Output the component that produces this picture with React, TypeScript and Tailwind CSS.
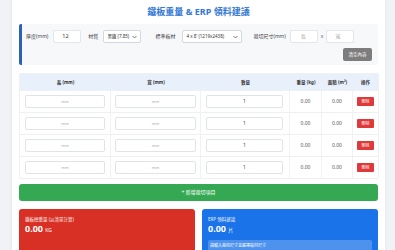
const font = { fontFamily: '"Noto Sans", "Noto Sans CJK TC", sans-serif' };

const rows = [0, 1, 2, 3];

function Chevron() {
  return (
    <svg width="5" height="4" viewBox="0 0 10 6" className="ml-auto">
      <path d="M1 1l4 4 4-4" fill="none" stroke="#555" strokeWidth="1.6" />
    </svg>
  );
}

export default function App() {
  return (
    <div className="min-h-[250px] w-[395px] overflow-hidden bg-[#f0f2f5]" style={font}>
      <div className="ml-3 mr-[10px] min-h-[250px] bg-white px-[7px] shadow-[0_0_4px_rgba(0,0,0,0.06)]">
        <h1 className="pt-[4px] pb-[5px] text-center text-[9px] leading-[15px] font-bold text-[#3479d4]">
          鐵板重量 &amp; ERP 領料建議
        </h1>

        <div className="rounded-[2px] border-l-[3px] border-[#2a62b8] bg-[#f6f8fa] pt-[6px] pr-[6px] pb-[4px] pl-[4px]">
          <div className="flex items-center text-[5px] text-[#444]">
            <span>厚度(mm)</span>
            <div className="ml-[5px] flex h-[13px] w-[28px] items-center rounded-[2px] border border-[#e3e6ea] bg-white pl-[8px] text-[5.5px] text-[#333]">
              12
            </div>
            <span className="ml-[7px]">材質</span>
            <div className="ml-[5px] flex h-[13px] w-[38px] items-center rounded-[2px] border border-[#d4d7db] bg-white px-[3px] text-[4.5px] text-[#333]">
              黑鐵 (7.85)
              <Chevron />
            </div>
            <span className="ml-[14px]">標準板材</span>
            <div className="ml-[7px] flex h-[13px] w-[60px] items-center rounded-[2px] border border-[#d4d7db] bg-white px-[3px] text-[4.5px] text-[#333]">
              4 x 8&apos; (1219x2438)
              <Chevron />
            </div>
            <span className="ml-[11px]">裁切尺寸(mm)</span>
            <div className="ml-[4px] flex h-[13px] w-[28px] items-center rounded-[2px] border border-[#e3e6ea] bg-white pl-[10px] text-[5px] text-[#aaa]">
              長
            </div>
            <span className="mx-[3px] text-[#666]">x</span>
            <div className="flex h-[13px] w-[28px] items-center rounded-[2px] border border-[#e3e6ea] bg-white pl-[8px] text-[5px] text-[#aaa]">
              寬
            </div>
          </div>
          <div className="mt-[5px] flex justify-end">
            <button className="h-[13px] w-[29px] rounded-[2px] bg-[#7d7d7d] text-[4.5px] text-white">
              清空內容
            </button>
          </div>
        </div>

        <div className="mt-[8px] mr-[-1px] overflow-hidden rounded-[2px] border border-[#eef0f3]">
          <div className="grid h-[16px] grid-cols-[91px_90px_89px_32px_31px_1fr] items-center bg-[#e8f0fc] text-center text-[4.5px] font-bold text-[#333]">
            <div>長 (mm)</div>
            <div>寬 (mm)</div>
            <div>數量</div>
            <div>重量 (kg)</div>
            <div>面積 (m²)</div>
            <div>操作</div>
          </div>
          {rows.map((r) => (
            <div
              key={r}
              className="grid h-[22px] grid-cols-[91px_90px_89px_32px_31px_1fr] items-center border-t border-[#eef0f3] text-center text-[5px] text-[#555]"
            >
              <div className="flex h-full items-center border-r border-[#f0f1f3] px-[5px]">
                <div className="flex h-[13px] w-full items-center justify-center rounded-[2px] border border-[#e0e3e7] bg-white text-[4px] text-[#aaa]">
                  mm
                </div>
              </div>
              <div className="flex h-full items-center border-r border-[#f0f1f3] px-[4px]">
                <div className="flex h-[13px] w-full items-center justify-center rounded-[2px] border border-[#e0e3e7] bg-white text-[4px] text-[#aaa]">
                  mm
                </div>
              </div>
              <div className="flex h-full items-center border-r border-[#f0f1f3] pr-[6px] pl-[5px]">
                <div className="flex h-[13px] w-full items-center justify-center rounded-[2px] border border-[#e0e3e7] bg-white text-[5px] text-[#444]">
                  1
                </div>
              </div>
              <div className="flex h-full items-center justify-center border-r border-[#f0f1f3]">0.00</div>
              <div className="flex h-full items-center justify-center border-r border-[#f0f1f3]">0.00</div>
              <div className="flex h-full items-center justify-center">
                <button className="h-[9px] w-[17px] rounded-[1px] bg-[#e0393a] text-[4px] leading-none text-white">
                  刪除
                </button>
              </div>
            </div>
          ))}
        </div>

        <button className="mt-[5px] flex h-[17px] w-full items-center justify-center rounded-[3px] bg-[#34a853] text-[5px] text-white">
          + 新增裁切項目
        </button>

        <div className="mt-[8px] flex gap-[7px]">
          <div className="h-[50px] w-[176px] rounded-[3px] bg-[#d93025] px-[6px] pt-[6px] text-white">
            <div className="text-[4.5px] leading-[8px] opacity-90">鐵板總重量 (以清單計算)</div>
            <div className="text-[9px] leading-[11px] font-bold">
              0.00 <span className="text-[5px] font-normal">KG</span>
            </div>
          </div>
          <div className="h-[50px] flex-1 rounded-[3px] bg-[#1a73e8] px-[6px] pt-[6px] text-white">
            <div className="text-[4.5px] leading-[8px] opacity-90">ERP 領料建議</div>
            <div className="text-[9px] leading-[11px] font-bold">
              0.00 <span className="text-[5px] font-normal">片</span>
            </div>
            <div className="mt-[4px] flex h-[11px] items-center rounded-[2px] bg-[#4d93ee] px-[2px] text-[4px]">
              請輸入裁切尺寸並選擇板材尺寸
            </div>
          </div>
        </div>
      </div>
    </div>
  );
}
